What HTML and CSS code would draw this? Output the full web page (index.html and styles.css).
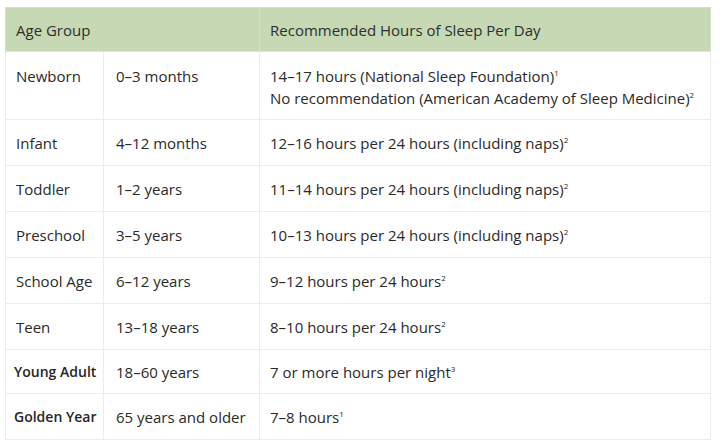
FILE: index.html
```html
<!DOCTYPE html>
<html lang="en">
<head>
<meta charset="utf-8">
<link rel="stylesheet" href="styles.css">
</head>
<body>
<table class="sleep">
  <colgroup>
    <col class="c1"><col class="c2"><col class="c3">
  </colgroup>
  <thead>
    <tr>
      <th colspan="2">Age Group</th>
      <th>Recommended Hours of Sleep Per Day</th>
    </tr>
  </thead>
  <tbody>
    <tr class="tall">
      <td>Newborn</td>
      <td>0–3 months</td>
      <td>14–17 hours (National Sleep Foundation)<sup>1</sup><br>No recommendation (American Academy of Sleep Medicine)<sup>2</sup></td>
    </tr>
    <tr>
      <td>Infant</td>
      <td>4–12 months</td>
      <td>12–16 hours per 24 hours (including naps)<sup>2</sup></td>
    </tr>
    <tr>
      <td>Toddler</td>
      <td>1–2 years</td>
      <td>11–14 hours per 24 hours (including naps)<sup>2</sup></td>
    </tr>
    <tr>
      <td>Preschool</td>
      <td>3–5 years</td>
      <td>10–13 hours per 24 hours (including naps)<sup>2</sup></td>
    </tr>
    <tr>
      <td>School Age</td>
      <td>6–12 years</td>
      <td>9–12 hours per 24 hours<sup>2</sup></td>
    </tr>
    <tr>
      <td>Teen</td>
      <td>13–18 years</td>
      <td>8–10 hours per 24 hours<sup>2</sup></td>
    </tr>
    <tr class="short">
      <td class="bold">Young Adult</td>
      <td>18–60 years</td>
      <td>7 or more hours per night<sup>3</sup></td>
    </tr>
    <tr>
      <td class="bold">Golden Year</td>
      <td>65 years and older</td>
      <td>7–8 hours<sup>1</sup></td>
    </tr>
  </tbody>
</table>
</body>
</html>
```

FILE: styles.css
```css
html, body {
  margin: 0;
  padding: 0;
  background: #ffffff;
}
body {
  padding: 7px 0 0 5px;
  font-family: "Open Sans", "Liberation Sans", sans-serif;
  color: #2a2a2a;
}
.sleep {
  border-collapse: collapse;
  table-layout: fixed;
  width: 705px;
  font-size: 15px;
  line-height: 22px;
}
.c1 { width: 98px; }
.c2 { width: 156px; }
.c3 { width: 451px; }
.sleep th {
  background: #c6d8b4;
  color: #2e2e2e;
  font-weight: 400;
  text-align: left;
  height: 44px;
  padding: 0 10px;
  box-sizing: border-box;
  border: 1px solid #d5e0ca;
  border-bottom-color: #dfe5da;
}
.sleep td {
  height: 46px;
  padding: 0 11px 0 12px;
  box-sizing: border-box;
  border: 1px solid #ececec;
  vertical-align: middle;
  white-space: nowrap;
}
.sleep td:first-child {
  padding-left: 10px;
}
.sleep td:last-child {
  padding-left: 10px;
}
.sleep tr.tall td {
  height: 68px;
  vertical-align: top;
  padding-top: 13px;
}
.sleep tr.short td {
  height: 44px;
}
.sleep td.bold {
  font-weight: 600;
  font-size: 14px;
  padding-left: 8px;
  color: #262626;
}
.sleep sup {
  font-size: 8px;
  line-height: 0;
  vertical-align: 6px;
}
```
